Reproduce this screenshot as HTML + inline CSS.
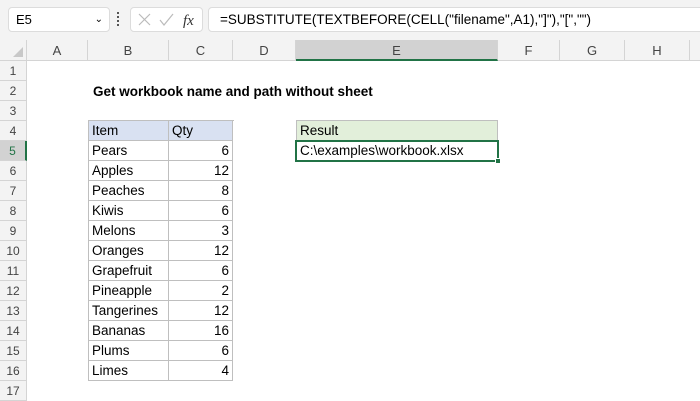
<!DOCTYPE html><html><head><style>
body{margin:0;width:700px;height:400px;overflow:hidden;background:#fff;font-family:"Liberation Sans",Calibri,sans-serif;position:relative}
div{position:absolute;box-sizing:border-box}
.ch{top:40px;height:21px;background:#f3f3f3;border-right:1px solid #d4d4d4;border-bottom:1px solid #d4d4d4;font-size:13px;color:#444;text-align:center;line-height:21px}
.rh{left:0;width:27px;height:20px;background:#f3f3f3;border-bottom:1px solid #d4d4d4;border-right:1px solid #d4d4d4;font-size:12px;color:#444;text-align:center;line-height:20px}
.c{height:20px;font-size:13.5px;line-height:20px;padding:0 3px;white-space:nowrap;color:#000}
.t{border-right:1px solid #bfbfbf;border-bottom:1px solid #bfbfbf}
.r{text-align:right}
</style></head><body>
<div style="left:0;top:0;width:700px;height:40px;background:#f3f3f3"></div>
<div style="left:8px;top:7px;width:102px;height:25px;background:#fff;border:1px solid #dcdcdc;border-radius:4px;font-size:13px;line-height:23px;padding-left:7px">E5<span style="position:absolute;right:6px;top:0;font-size:10px">&#8964;</span></div>
<div style="left:117px;top:12px;width:3px;height:14px;border-left:2px dotted #555"></div>
<div style="left:130px;top:7px;width:73px;height:25px;background:#fff;border:1px solid #dcdcdc;border-radius:4px"></div>
<svg style="position:absolute;left:136px;top:12px" width="64" height="16"><path d="M3 2l11 11M14 2L3 13" stroke="#bbb" stroke-width="1.2" fill="none"/><path d="M24 8l4 5 9-11" stroke="#bbb" stroke-width="1.2" fill="none"/><text x="47" y="13" font-family="Liberation Serif" font-style="italic" font-size="15" fill="#333">fx</text></svg>
<div style="left:208px;top:7px;width:500px;height:25px;background:#fff;border:1px solid #dcdcdc;border-radius:4px;font-size:13.5px;line-height:23px;padding-left:11px">=SUBSTITUTE(TEXTBEFORE(CELL("filename",A1),"]"),"[","")</div>
<div class="ch" style="left:0;width:27px"></div>
<svg style="position:absolute;left:12px;top:46px" width="12" height="12"><path d="M11 1V11H1Z" fill="#c8c8c8"/></svg>
<div class="ch" style="left:27px;width:61px">A</div>
<div class="ch" style="left:88px;width:81px">B</div>
<div class="ch" style="left:169px;width:64px">C</div>
<div class="ch" style="left:233px;width:63px">D</div>
<div class="ch" style="left:296px;width:202px;background:#d2d2d2;border-bottom:2px solid #217346">E</div>
<div class="ch" style="left:498px;width:62px">F</div>
<div class="ch" style="left:560px;width:65px">G</div>
<div class="ch" style="left:625px;width:65px">H</div>
<div class="ch" style="left:690px;width:20px"></div>
<div class="rh" style="top:61px">1</div><div class="rh" style="top:81px">2</div><div class="rh" style="top:101px">3</div><div class="rh" style="top:121px">4</div>
<div class="rh" style="top:141px;background:#d2d2d2;border-right:2px solid #217346;color:#217346">5</div>
<div class="rh" style="top:161px">6</div><div class="rh" style="top:181px">7</div><div class="rh" style="top:201px">8</div><div class="rh" style="top:221px">9</div><div class="rh" style="top:241px">10</div><div class="rh" style="top:261px">11</div><div class="rh" style="top:281px">12</div><div class="rh" style="top:301px">13</div><div class="rh" style="top:321px">14</div><div class="rh" style="top:341px">15</div><div class="rh" style="top:361px">16</div><div class="rh" style="top:381px">17</div>
<div class="c" style="left:90px;top:82px;font-weight:bold;font-size:13.5px">Get workbook name and path without sheet</div>
<div style="left:88px;top:120px;width:146px;height:261px;border-left:1px solid #bfbfbf;border-top:1px solid #bfbfbf"></div>
<div class="c t" style="left:89px;top:121px;width:80px;background:#d9e1f2">Item</div><div class="c t" style="left:169px;top:121px;width:64px;background:#d9e1f2">Qty</div>
<div class="c t" style="left:89px;top:141px;width:80px">Pears</div><div class="c t r" style="left:169px;top:141px;width:64px">6</div>
<div class="c t" style="left:89px;top:161px;width:80px">Apples</div><div class="c t r" style="left:169px;top:161px;width:64px">12</div>
<div class="c t" style="left:89px;top:181px;width:80px">Peaches</div><div class="c t r" style="left:169px;top:181px;width:64px">8</div>
<div class="c t" style="left:89px;top:201px;width:80px">Kiwis</div><div class="c t r" style="left:169px;top:201px;width:64px">6</div>
<div class="c t" style="left:89px;top:221px;width:80px">Melons</div><div class="c t r" style="left:169px;top:221px;width:64px">3</div>
<div class="c t" style="left:89px;top:241px;width:80px">Oranges</div><div class="c t r" style="left:169px;top:241px;width:64px">12</div>
<div class="c t" style="left:89px;top:261px;width:80px">Grapefruit</div><div class="c t r" style="left:169px;top:261px;width:64px">6</div>
<div class="c t" style="left:89px;top:281px;width:80px">Pineapple</div><div class="c t r" style="left:169px;top:281px;width:64px">2</div>
<div class="c t" style="left:89px;top:301px;width:80px">Tangerines</div><div class="c t r" style="left:169px;top:301px;width:64px">12</div>
<div class="c t" style="left:89px;top:321px;width:80px">Bananas</div><div class="c t r" style="left:169px;top:321px;width:64px">16</div>
<div class="c t" style="left:89px;top:341px;width:80px">Plums</div><div class="c t r" style="left:169px;top:341px;width:64px">6</div>
<div class="c t" style="left:89px;top:361px;width:80px">Limes</div><div class="c t r" style="left:169px;top:361px;width:64px">4</div>
<div class="c" style="left:296px;top:120px;width:202px;height:21px;background:#e2efda;border:1px solid #bfbfbf">Result</div>
<div class="c" style="left:295px;top:140px;width:204px;height:22px;border:2px solid #217346;line-height:18px">C:\examples\workbook.xlsx</div>
<div style="left:495px;top:158px;width:6px;height:6px;background:#217346;border:1px solid #fff"></div>
</body></html>
